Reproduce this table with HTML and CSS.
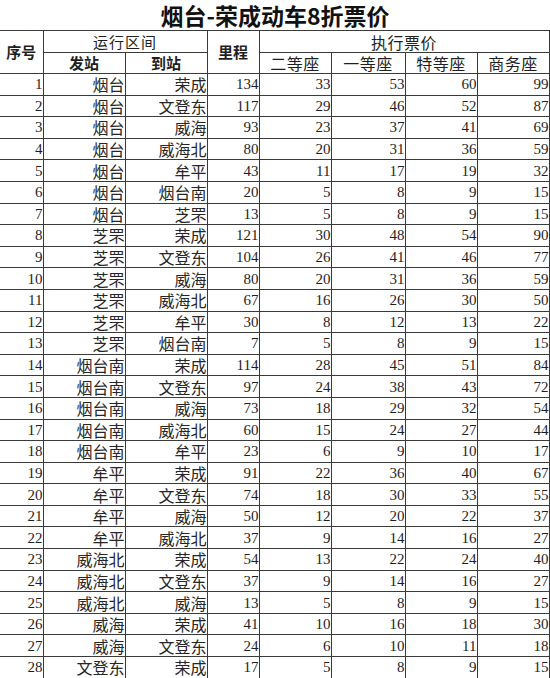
FILE: index.html
```html
<!DOCTYPE html>
<html lang="zh">
<head>
<meta charset="utf-8">
<title>烟台-荣成动车8折票价</title>
<link rel="stylesheet" href="styles.css">
</head>
<body>
<div class="sheet">
  <h1 class="title">烟台-荣成动车8折票价</h1>
  <table class="fares">
    <colgroup>
      <col class="c-no"><col class="c-st"><col class="c-st"><col class="c-km">
      <col class="c-p1"><col class="c-p2"><col class="c-p1"><col class="c-p1">
    </colgroup>
    <thead>
      <tr class="h1">
        <th rowspan="2" class="bold">序号</th>
        <th colspan="2" class="plain">运行区间</th>
        <th rowspan="2" class="bold">里程</th>
        <th colspan="4" class="plain wide">执行票价</th>
      </tr>
      <tr class="h2">
        <th class="bold">发站</th>
        <th class="bold">到站</th>
        <th class="plain wide">二等座</th>
        <th class="plain wide">一等座</th>
        <th class="plain wide">特等座</th>
        <th class="plain wide">商务座</th>
      </tr>
    </thead>
    <tbody>
      <tr><td class="n">1</td><td class="s">烟台</td><td class="s">荣成</td><td class="n">134</td><td class="n">33</td><td class="n">53</td><td class="n">60</td><td class="n">99</td></tr>
      <tr><td class="n">2</td><td class="s">烟台</td><td class="s">文登东</td><td class="n">117</td><td class="n">29</td><td class="n">46</td><td class="n">52</td><td class="n">87</td></tr>
      <tr><td class="n">3</td><td class="s">烟台</td><td class="s">威海</td><td class="n">93</td><td class="n">23</td><td class="n">37</td><td class="n">41</td><td class="n">69</td></tr>
      <tr><td class="n">4</td><td class="s">烟台</td><td class="s">威海北</td><td class="n">80</td><td class="n">20</td><td class="n">31</td><td class="n">36</td><td class="n">59</td></tr>
      <tr><td class="n">5</td><td class="s">烟台</td><td class="s">牟平</td><td class="n">43</td><td class="n">11</td><td class="n">17</td><td class="n">19</td><td class="n">32</td></tr>
      <tr><td class="n">6</td><td class="s">烟台</td><td class="s">烟台南</td><td class="n">20</td><td class="n">5</td><td class="n">8</td><td class="n">9</td><td class="n">15</td></tr>
      <tr><td class="n">7</td><td class="s">烟台</td><td class="s">芝罘</td><td class="n">13</td><td class="n">5</td><td class="n">8</td><td class="n">9</td><td class="n">15</td></tr>
      <tr><td class="n">8</td><td class="s">芝罘</td><td class="s">荣成</td><td class="n">121</td><td class="n">30</td><td class="n">48</td><td class="n">54</td><td class="n">90</td></tr>
      <tr><td class="n">9</td><td class="s">芝罘</td><td class="s">文登东</td><td class="n">104</td><td class="n">26</td><td class="n">41</td><td class="n">46</td><td class="n">77</td></tr>
      <tr><td class="n">10</td><td class="s">芝罘</td><td class="s">威海</td><td class="n">80</td><td class="n">20</td><td class="n">31</td><td class="n">36</td><td class="n">59</td></tr>
      <tr><td class="n">11</td><td class="s">芝罘</td><td class="s">威海北</td><td class="n">67</td><td class="n">16</td><td class="n">26</td><td class="n">30</td><td class="n">50</td></tr>
      <tr><td class="n">12</td><td class="s">芝罘</td><td class="s">牟平</td><td class="n">30</td><td class="n">8</td><td class="n">12</td><td class="n">13</td><td class="n">22</td></tr>
      <tr><td class="n">13</td><td class="s">芝罘</td><td class="s">烟台南</td><td class="n">7</td><td class="n">5</td><td class="n">8</td><td class="n">9</td><td class="n">15</td></tr>
      <tr><td class="n">14</td><td class="s">烟台南</td><td class="s">荣成</td><td class="n">114</td><td class="n">28</td><td class="n">45</td><td class="n">51</td><td class="n">84</td></tr>
      <tr><td class="n">15</td><td class="s">烟台南</td><td class="s">文登东</td><td class="n">97</td><td class="n">24</td><td class="n">38</td><td class="n">43</td><td class="n">72</td></tr>
      <tr><td class="n">16</td><td class="s">烟台南</td><td class="s">威海</td><td class="n">73</td><td class="n">18</td><td class="n">29</td><td class="n">32</td><td class="n">54</td></tr>
      <tr><td class="n">17</td><td class="s">烟台南</td><td class="s">威海北</td><td class="n">60</td><td class="n">15</td><td class="n">24</td><td class="n">27</td><td class="n">44</td></tr>
      <tr><td class="n">18</td><td class="s">烟台南</td><td class="s">牟平</td><td class="n">23</td><td class="n">6</td><td class="n">9</td><td class="n">10</td><td class="n">17</td></tr>
      <tr><td class="n">19</td><td class="s">牟平</td><td class="s">荣成</td><td class="n">91</td><td class="n">22</td><td class="n">36</td><td class="n">40</td><td class="n">67</td></tr>
      <tr><td class="n">20</td><td class="s">牟平</td><td class="s">文登东</td><td class="n">74</td><td class="n">18</td><td class="n">30</td><td class="n">33</td><td class="n">55</td></tr>
      <tr><td class="n">21</td><td class="s">牟平</td><td class="s">威海</td><td class="n">50</td><td class="n">12</td><td class="n">20</td><td class="n">22</td><td class="n">37</td></tr>
      <tr><td class="n">22</td><td class="s">牟平</td><td class="s">威海北</td><td class="n">37</td><td class="n">9</td><td class="n">14</td><td class="n">16</td><td class="n">27</td></tr>
      <tr><td class="n">23</td><td class="s">威海北</td><td class="s">荣成</td><td class="n">54</td><td class="n">13</td><td class="n">22</td><td class="n">24</td><td class="n">40</td></tr>
      <tr><td class="n">24</td><td class="s">威海北</td><td class="s">文登东</td><td class="n">37</td><td class="n">9</td><td class="n">14</td><td class="n">16</td><td class="n">27</td></tr>
      <tr><td class="n">25</td><td class="s">威海北</td><td class="s">威海</td><td class="n">13</td><td class="n">5</td><td class="n">8</td><td class="n">9</td><td class="n">15</td></tr>
      <tr><td class="n">26</td><td class="s">威海</td><td class="s">荣成</td><td class="n">41</td><td class="n">10</td><td class="n">16</td><td class="n">18</td><td class="n">30</td></tr>
      <tr><td class="n">27</td><td class="s">威海</td><td class="s">文登东</td><td class="n">24</td><td class="n">6</td><td class="n">10</td><td class="n">11</td><td class="n">18</td></tr>
      <tr><td class="n">28</td><td class="s">文登东</td><td class="s">荣成</td><td class="n">17</td><td class="n">5</td><td class="n">8</td><td class="n">9</td><td class="n">15</td></tr>
    </tbody>
  </table>
</div>
</body>
</html>
```
FILE: styles.css
```css
html, body {
  margin: 0;
  padding: 0;
  background: #fff;
}
body {
  font-family: "Noto Sans CJK SC", "Noto Sans", sans-serif;
  color: #1f1f1f;
}
.sheet {
  width: 550px;
  height: 678px;
  overflow: hidden;
}
.title {
  margin: 0;
  box-sizing: border-box;
  height: 30px;
  padding-top: 4px;
  line-height: 23px;
  text-align: center;
  font-size: 23px;
  font-weight: 700;
  color: #111;
}
.fares {
  table-layout: fixed;
  border-collapse: collapse;
  width: 549px;
}
.c-no { width: 43px; }
.c-st { width: 82px; }
.c-km { width: 52px; }
.c-p1 { width: 72px; }
.c-p2 { width: 74px; }
.fares th,
.fares td {
  border: 1px solid #3a3a3a;
  padding: 0;
  overflow: hidden;
  white-space: nowrap;
}
.fares tr > :first-child {
  border-left: none;
}
.fares th {
  text-align: center;
  line-height: 18px;
}
.h1 { height: 22px; }
.h2 { height: 21px; }
.bold {
  font-weight: 700;
  font-size: 15px;
}
.plain {
  font-weight: 400;
  font-size: 15px;
  letter-spacing: 1px;
}
.wide {
  font-size: 16px;
  letter-spacing: 0.5px;
}
.fares tbody tr {
  height: 21.6px;
}
.n {
  text-align: right;
  padding-right: 3px;
  font-family: "Liberation Serif", "DejaVu Serif", serif;
  font-size: 15px;
  line-height: 18px;
}
.s {
  text-align: right;
  padding-right: 4px;
  font-size: 16px;
  line-height: 18px;
  font-weight: 400;
  color: #262626;
}
```
